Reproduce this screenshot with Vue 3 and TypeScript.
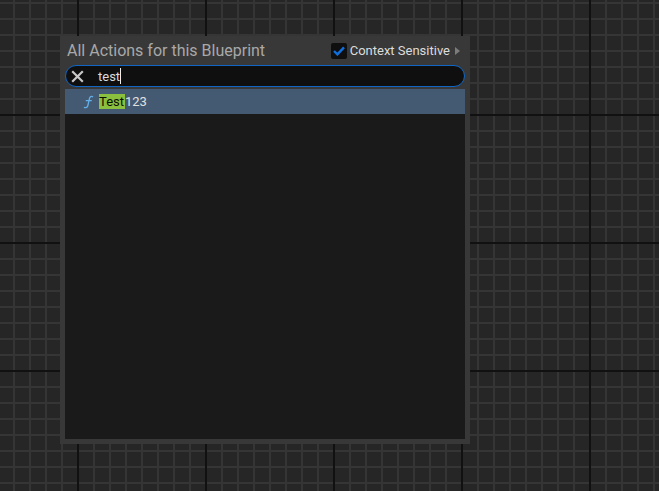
<script setup lang="ts">
const query = 'test'
</script>

<template>
  <div class="canvas">
    <section class="menu">
      <header class="head">
        <h1 class="title">All Actions for this Blueprint</h1>
        <label class="context">
          <span class="check">
            <svg viewBox="0 0 12 10" width="12" height="10"><path d="M1 5 4.4 8.4 11 1.4" fill="none" stroke="#0f6fdc" stroke-width="2.4" /></svg>
          </span>
          <span class="context-label">Context Sensitive</span>
          <svg class="arrow" viewBox="0 0 5 8" width="5" height="8"><path d="M0 0 5 4 0 8Z" fill="#7c7c7c" /></svg>
        </label>
      </header>
      <div class="search">
        <svg class="clear" viewBox="0 0 13 13" width="13" height="13"><path d="M1.2 1.2 11.8 11.8M11.8 1.2 1.2 11.8" stroke="#c8c8c8" stroke-width="2.2" fill="none" /></svg>
        <span class="query">{{ query }}</span><span class="caret"></span>
      </div>
      <div class="results">
        <div class="row">
          <svg class="fn" viewBox="0 0 12 14" width="11" height="14">
            <path d="M11 1.4C9 .5 7.6 1 7.1 3L5.3 10.8C4.8 12.9 3.2 13.5 1 12.8M3 5.6H9.6" fill="none" stroke="#62b0e8" stroke-width="1.4" />
          </svg>
          <span class="name"><mark class="hit">Test</mark>123</span>
        </div>
      </div>
    </section>
  </div>
</template>

<style>
html, body { margin: 0; background: #262626; }
</style>

<style scoped>
.canvas {
  width: 659px;
  height: 491px;
  box-sizing: border-box;
  padding: 36px 0 0 60px;
  overflow: hidden;
  font-family: Roboto, "Open Sans", sans-serif;
  background-color: #262626;
  background-image:
    linear-gradient(to right, #111 2px, transparent 2px),
    linear-gradient(to bottom, #111 2px, transparent 2px),
    linear-gradient(to right, #353535 2px, transparent 2px),
    linear-gradient(to bottom, #353535 2px, transparent 2px);
  background-size: 128px 128px, 128px 128px, 16px 16px, 16px 16px;
  background-position: 77px 0, 0 114px, 13px 0, 0 2px;
}
.menu {
  width: 410px;
  height: 408px;
  box-sizing: border-box;
  background: #383838;
  padding: 0 5px 5px;
  display: flex;
  flex-direction: column;
}
.head {
  height: 29px;
  display: flex;
  align-items: center;
  justify-content: space-between;
  padding: 0 5px 0 2px;
}
.title {
  margin: 0;
  font-size: 16px;
  font-weight: 400;
  color: #a8a8a8;
}
.context { display: flex; align-items: center; gap: 3px; }
.check {
  width: 16px; height: 16px;
  background: #0f0f0f;
  border-radius: 2px;
  display: flex; align-items: center; justify-content: center;
}
.context-label { font-size: 13px; color: #dcdcdc; }
.arrow { margin-left: 2px; }
.search {
  height: 22px;
  box-sizing: border-box;
  border: 1px solid #0f66c4;
  border-radius: 11px;
  background: #0f0f0f;
  display: flex;
  align-items: center;
  padding-left: 5px;
}
.clear { margin-right: 14px; }
.query { font-size: 13px; color: #dcdcdc; }
.caret { width: 1px; height: 16px; background: #eee; }
.results {
  flex: 1;
  background: #1a1a1a;
  margin-top: 2px;
}
.row {
  height: 25px;
  background: #445a72;
  display: flex;
  align-items: center;
  padding-left: 18px;
}
.fn { margin-right: 5px; }
.name { font-size: 13px; color: #e0e0e0; line-height: 15px; }
.hit { display: inline-block; padding-right: 1px; background: #8bc03f; color: #0a0f00; }
</style>
